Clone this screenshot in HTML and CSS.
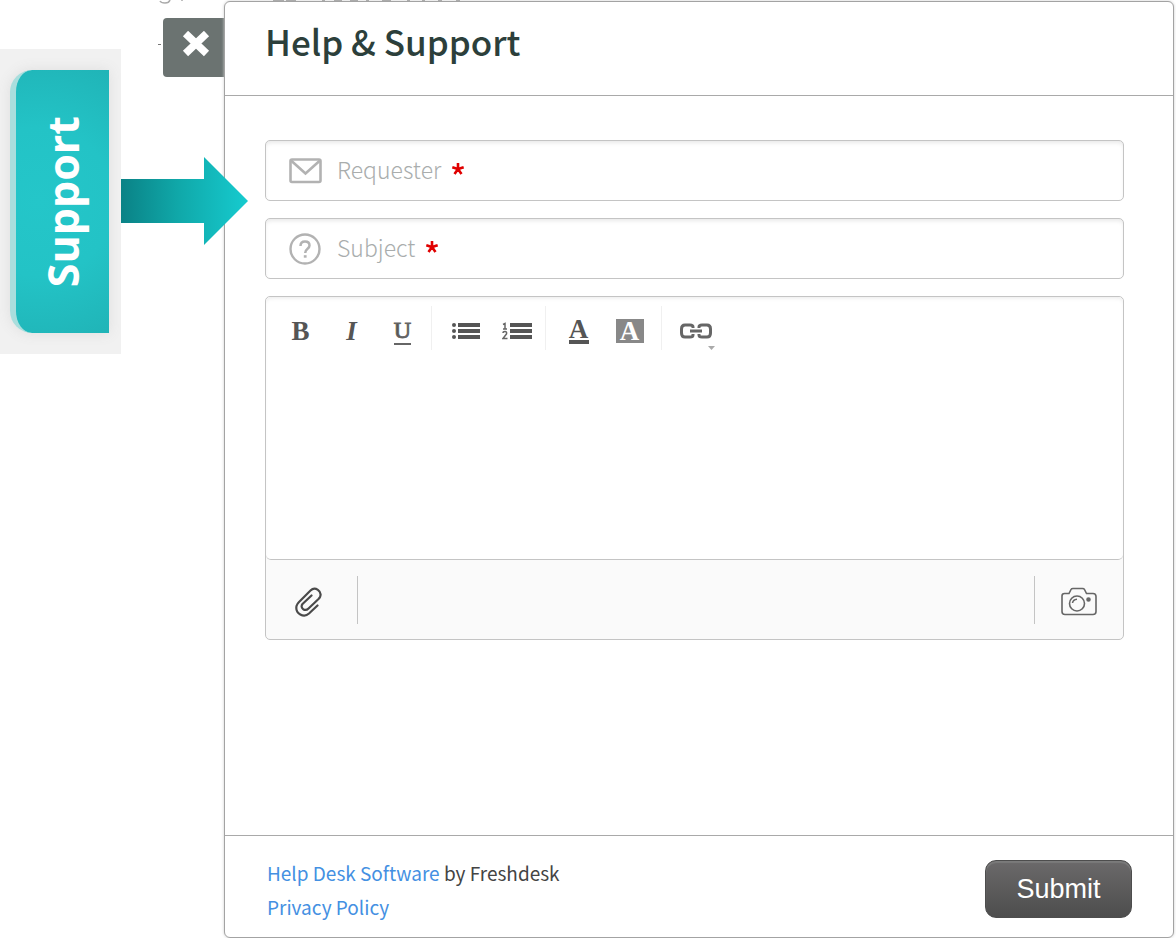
FILE: index.html
```html
<!DOCTYPE html>
<html lang="en">
<head>
<meta charset="utf-8">
<meta name="viewport" content="width=device-width, initial-scale=1">
<title>Help &amp; Support</title>
<link rel="stylesheet" href="styles.css">
</head>
<body>
<div class="page">
  <svg class="backdrop" width="480" height="48" viewBox="0 0 480 48" aria-hidden="true">
    <path d="M160 1q1 2 5 2t5-3M182 0v1" fill="none" stroke="#aaa" stroke-width="1.5"/>
    <path d="M273 .5h11M286 .5h10M322 .5h3M334 .5h8M350 .5h8M366 .5h3M382 .5h9M407 .5h3M422 .5h3M438 .5h4M456 .5h4" stroke="#999"/>
    <path d="M158 44.500h3" stroke="#777"/>
  </svg>

  <aside class="launcher">
    <button class="support-tab" type="button"><span class="support-text">Support</span></button>
    <svg class="arrow" width="127" height="88" viewBox="0 0 127 88" aria-hidden="true">
      <defs>
        <linearGradient id="teal"><stop offset="0" stop-color="#0a8286"/><stop offset=".45" stop-color="#10a8a9"/><stop offset="1" stop-color="#16cbcf"/></linearGradient>
      </defs>
      <path d="M0 22H83V0L127 44 83 88V66H0Z" fill="url(#teal)"/>
    </svg>
  </aside>

  <div class="close-column">
    <button class="close" type="button" aria-label="Close">
      <svg width="28" height="26" viewBox="0 0 28 26" aria-hidden="true"><path d="M3.500 2.500L24.500 22.500M24.500 2.500L3.500 22.500" stroke="#fff" stroke-width="7.500"/></svg>
    </button>
  </div>

  <main class="dialog">
    <header class="dialog-header"><h1 class="title">Help &amp; Support</h1></header>

    <form class="form" id="ticket">
      <div class="field">
        <svg class="field-icon" width="33" height="32" viewBox="0 0 33 32" fill="none" stroke="#b2b2b2" stroke-width="2.600" aria-hidden="true"><rect x="1.500" y="4.500" width="30" height="22.500" rx="1.500"/><path d="M2 5.500L16.500 18.500 31 5.500"/></svg>
        <label class="label" for="requester">Requester <svg class="star" width="14" height="14" viewBox="0 0 14 14" role="img" aria-label="required"><path d="M7 7V1M7 7L1.300 5.200M7 7L12.700 5.200M7 7L3.500 12M7 7L10.500 12" stroke="#e00000" stroke-width="2.600"/></svg></label>
        <input class="input" id="requester" type="text" required>
      </div>
      <div class="field">
        <svg class="field-icon" width="33" height="32" viewBox="0 0 33 32" fill="none" stroke="#b2b2b2" stroke-width="2.400" aria-hidden="true"><circle cx="16" cy="16" r="14.500"/><path d="M11.500 13Q11.500 8.500 16 8.500T20.500 12.500C20.500 16 16.200 15.500 16.200 20" stroke-width="2.500"/><path d="M16.200 22.200v2.500" stroke-width="2.800"/></svg>
        <label class="label" for="subject">Subject <svg class="star" width="14" height="14" viewBox="0 0 14 14" role="img" aria-label="required"><path d="M7 7V1M7 7L1.300 5.200M7 7L12.700 5.200M7 7L3.500 12M7 7L10.500 12" stroke="#e00000" stroke-width="2.600"/></svg></label>
        <input class="input" id="subject" type="text" required>
      </div>

      <div class="editor">
        <div class="compose">
          <div class="toolbar" role="toolbar" aria-label="Formatting">
            <div class="tools styles">
              <button class="tool bold" type="button" aria-label="Bold">B</button>
              <button class="tool italic" type="button" aria-label="Italic">I</button>
              <button class="tool underline" type="button" aria-label="Underline"><span class="underlined">U</span></button>
            </div>
            <div class="tools lists">
              <button class="tool" type="button" aria-label="Bulleted list">
                <svg width="28" height="18" viewBox="0 0 28 18" fill="#555"><path d="M6 1h22v4H6zM6 7h22v4H6zM6 13h22v4H6z"/><circle cx="2" cy="3" r="2"/><circle cx="2" cy="9" r="2"/><circle cx="2" cy="15" r="2"/></svg>
              </button>
              <button class="tool" type="button" aria-label="Numbered list">
                <svg width="30" height="18" viewBox="0 0 30 18"><path d="M8 1h22v4H8zM8 7h22v4H8zM8 13h22v4H8z" fill="#555"/><path d="M1 2.500L3 1.500V7M1 7h4M1 11q0-1.500 2-1.500t1.500 2.500L1 16.500h4.500" fill="none" stroke="#666" stroke-width="1.500"/></svg>
              </button>
            </div>
            <div class="tools colors">
              <button class="tool" type="button" aria-label="Text color"><span class="color-letter">A</span></button>
              <button class="tool" type="button" aria-label="Background color"><span class="fill-letter">A</span></button>
            </div>
            <div class="tools links">
              <button class="tool" type="button" aria-label="Link">
                <svg width="38" height="42" viewBox="0 0 38 42" fill="none" stroke="#666" stroke-width="3"><path d="M16 18V17Q16 15 13 15H8Q4.500 15 4.500 19V23Q4.500 27 8 27H13Q16 27 16 25V24M22 18V17Q22 15 25 15H30Q33.500 15 33.500 19V23Q33.500 27 30 27H25Q22 27 22 25V24M13 21H25"/><path d="M31 36h7l-3.500 4z" fill="#aaa" stroke="none"/></svg>
              </button>
            </div>
          </div>
          <textarea class="message" aria-label="Message"></textarea>
        </div>
        <div class="attachments">
          <button class="attach" type="button" aria-label="Attach a file">
            <svg width="30" height="32" viewBox="0 0 30 32" fill="none" stroke="#4a4a4a" stroke-width="2.200" stroke-linecap="round" stroke-linejoin="round"><path d="M24.500 19.500L16 27.500C11 32 2 28 3.500 20Q4 18 6 16L17.500 4.500C22 0 29.500 5 27 11Q26.500 12 25.500 13L15.500 22.500C12 26 6.500 22 9.500 18L18.500 9.500"/></svg>
          </button>
          <button class="capture" type="button" aria-label="Take a screenshot">
            <svg width="36" height="30" viewBox="0 0 36 30" fill="none" stroke="#666" stroke-width="1.600"><path d="M1 9Q1 6.500 3.500 6.500H8L10 2.500Q10.500 1.500 12 1.500H21.500Q23 1.500 23.500 2.500L25.500 6.500H32Q35 6.500 35 9.500V24.500Q35 27.500 32 27.500H4Q1 27.500 1 24.500Z"/><circle cx="16" cy="16.500" r="7.500"/><path d="M11.500 16Q12 12.500 16 12.200"/><circle cx="27.500" cy="12.500" r="1.500" fill="#666"/></svg>
          </button>
        </div>
      </div>
    </form>

    <footer class="dialog-footer">
      <div class="credits">
        <p class="credit"><a class="link" href="#software">Help Desk Software</a> by Freshdesk</p>
        <p class="credit"><a class="link" href="#privacy">Privacy Policy</a></p>
      </div>
      <button class="submit" type="submit" form="ticket">Submit</button>
    </footer>
  </main>
</div>
</body>
</html>
```

FILE: styles.css
```css
* { box-sizing: border-box; }

body {
  margin: 0;
  background: #fff;
  color: #444;
  font-family: "Noto Sans CJK SC", "Noto Sans", sans-serif;
}

button { padding: 0; border: 0; background: none; cursor: pointer; }
svg { display: block; flex: none; }

.page {
  position: relative;
  display: flex;
  min-height: 100vh;
  padding: 1px 2px 0 0;
}

.backdrop { position: absolute; top: 0; left: 0; }

.launcher {
  position: relative;
  flex: none;
  align-self: flex-start;
  width: 121px;
  margin-top: 48px;
  padding: 21px 12px 21px 10px;
  background: #f1f1f1;
}

.support-tab {
  display: flex;
  align-items: center;
  justify-content: center;
  width: 100%;
  height: 263px;
  border-left: 6px solid #a9dedd;
  border-radius: 22px 0 0 22px;
  background: radial-gradient(circle at 25% 50%, #24c6c9 0%, #23c3c6 50%, #20b4b7 100%);
  box-shadow: 0 0 14px #dedede;
}

.support-text {
  color: #fff;
  font: 700 43px/48px "Open Sans", sans-serif;
  writing-mode: vertical-rl;
  transform: rotate(180deg);
}

.arrow { position: absolute; top: 108px; left: 121px; z-index: 2; }

.close-column {
  flex: none;
  display: flex;
  align-items: flex-start;
  width: 103px;
  padding: 17px 0 0 42px;
}

.close {
  display: flex;
  justify-content: center;
  width: 61px;
  height: 59px;
  padding: 13px 0 0 4px;
  border-radius: 4px 0 0 4px;
  background: #6b7371;
}

.dialog {
  position: relative;
  display: flex;
  flex: 1;
  flex-direction: column;
  min-width: 0;
  border: 1px solid #a3a3a3;
  border-radius: 6px;
  background: #fff;
  box-shadow: 0 0 3px #ccc;
}

.dialog-header {
  height: 94px;
  padding: 14px 40px;
  border-bottom: 1px solid #a9a9a9;
}

.title {
  margin: 0;
  color: #2c3f3b;
  font-size: 35px;
  font-weight: 500;
  line-height: 50px;
}

.form {
  display: flex;
  flex: 1;
  flex-direction: column;
  gap: 17px;
  padding: 44px 49px 44px 40px;
}

.field {
  display: flex;
  align-items: center;
  height: 61px;
  padding: 0 23px;
  border: 1px solid #c4c4c4;
  border-radius: 5px;
  box-shadow: inset 0 3px 4px -1px #e9e9e9;
}

.label {
  display: flex;
  align-items: center;
  gap: 10px;
  margin-left: 15px;
  padding-bottom: 4px;
  color: #a9adad;
  font-size: 23px;
  font-weight: 300;
  line-height: 34px;
}

.input {
  flex: 1;
  min-width: 0;
  height: 34px;
  margin-left: 8px;
  padding: 0;
  border: 0;
  outline: 0;
  background: transparent;
  color: #444;
  font: inherit;
  font-size: 23px;
}

.editor {
  border: 1px solid #c4c4c4;
  border-radius: 5px;
  background: #fafafa;
}

.compose {
  display: flex;
  flex-direction: column;
  height: 263px;
  border-bottom: 1px solid #c4c4c4;
  border-radius: 5px;
  background: #fff;
  box-shadow: inset 0 3px 4px -2px #e9e9e9;
}

.toolbar { display: flex; padding: 9px 8px 0; }

.tools { display: flex; height: 44px; }
.tools + .tools { border-left: 1px solid #f0f0f0; }
.styles { width: 157px; padding-left: 1px; }
.lists { width: 114px; padding-left: 8px; }
.colors { width: 116px; padding-left: 7px; }
.links { padding-left: 8px; }

.tool {
  display: flex;
  align-items: center;
  justify-content: center;
  width: 51px;
  height: 50px;
  color: #555;
  font: 700 27px/30px "Liberation Serif", serif;
}

.italic { font-style: italic; }
.underline { font-size: 24px; font-weight: 400; -webkit-text-stroke: 1px #666; }
.underlined { height: 27px; border-bottom: 2px solid #666; line-height: 25px; }
.color-letter { width: 20px; height: 26px; border-bottom: 4px solid #555; line-height: 22px; }
.fill-letter { width: 28px; height: 24px; background: #888; color: #fff; line-height: 25px; }

.message {
  flex: 1;
  width: 100%;
  padding: 8px 24px;
  border: 0;
  outline: 0;
  resize: none;
  background: transparent;
  color: #444;
  font: inherit;
  font-size: 23px;
}

.attachments {
  display: flex;
  align-items: center;
  justify-content: space-between;
  height: 79px;
}

.attach, .capture {
  display: flex;
  align-items: center;
  justify-content: center;
  height: 48px;
  padding-top: 4px;
}
.attach { width: 92px; padding-right: 8px; border-right: 1px solid #c4c4c4; }
.capture { width: 89px; border-left: 1px solid #c4c4c4; }

.dialog-footer {
  display: flex;
  align-items: flex-start;
  justify-content: space-between;
  height: 102px;
  padding: 20px 41px 0 42px;
  border-top: 1px solid #a9a9a9;
}

.credit { margin: 0; font-size: 19px; line-height: 34px; }
.link { color: #4490e2; text-decoration: none; }

.submit {
  width: 147px;
  height: 58px;
  margin-top: 4px;
  border: 1px solid #4d4d4d;
  border-radius: 11px;
  background: linear-gradient(#6b696a, #4d4d4d);
  box-shadow: inset 0 2px 1px #7b7b7b;
  color: #fff;
  font: 27px/32px "Liberation Sans", Arial, sans-serif;
}
```
